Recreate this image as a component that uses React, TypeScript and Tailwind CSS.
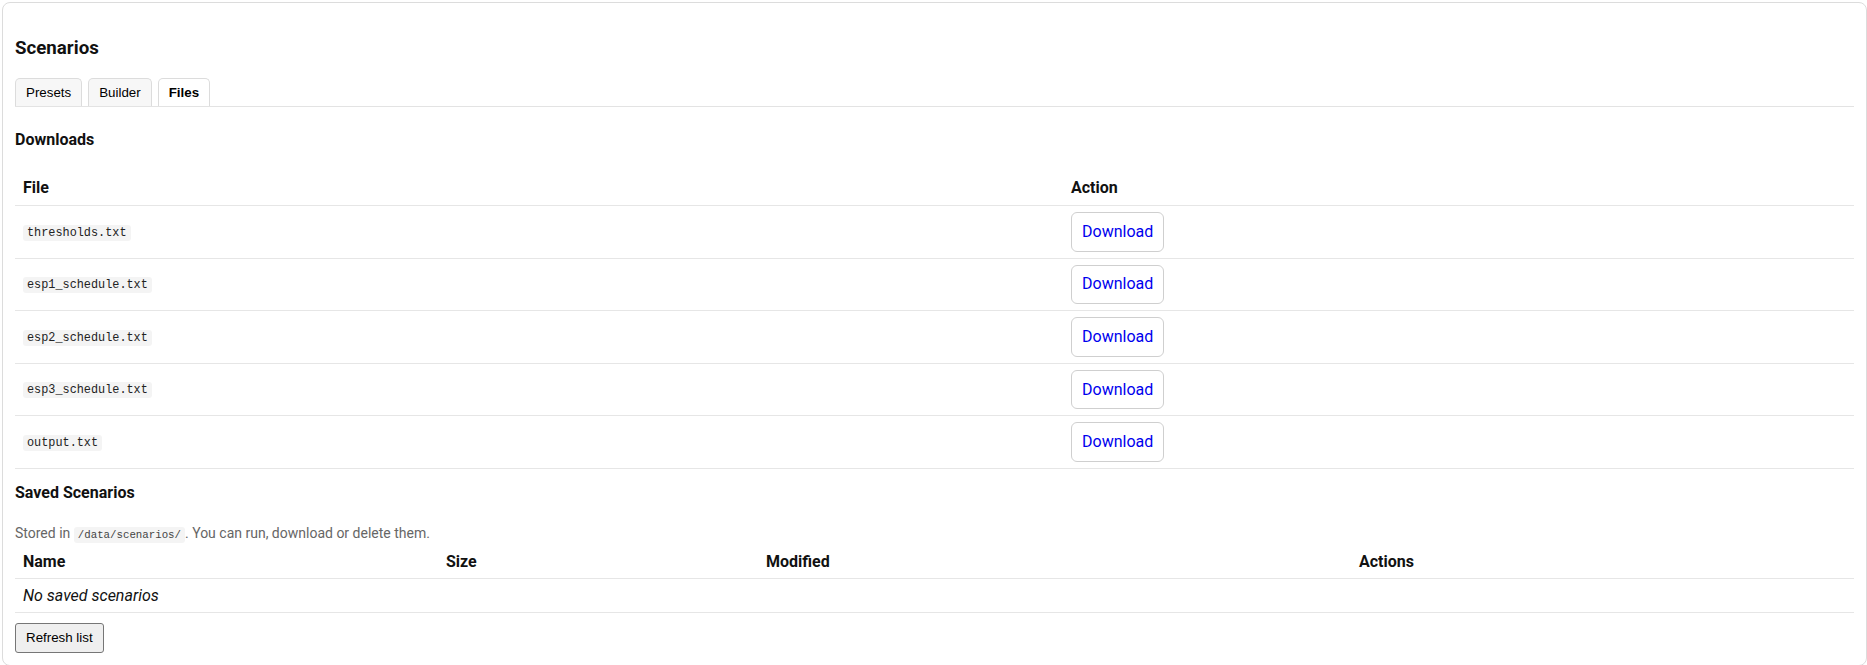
import React from "react";

const files = [
  "thresholds.txt",
  "esp1_schedule.txt",
  "esp2_schedule.txt",
  "esp3_schedule.txt",
  "output.txt",
];

const sans = "font-['Roboto','Segoe_UI',sans-serif]";
const arial = "font-['Liberation_Sans',Arial,sans-serif]";
const mono = "font-['Liberation_Mono','Courier_New',monospace]";

export default function App() {
  return (
    <div className={`pl-[2px] pt-[2px] bg-white text-[#111] ${sans}`}>
      <div className="border border-[#dcdcdc] rounded-[8px] p-3">
        <h3 className="mt-[21px] text-[18.72px] leading-[24px] font-bold text-[#111]">
          Scenarios
        </h3>

        <div className="mt-[18px] flex gap-[6px] border-b border-[#e3e3e3]">
          <button
            className={`${arial} h-[28px] px-[10px] pt-[6px] pb-[6px] text-[13.33px] leading-[15px] text-black bg-[#f7f7f7] border border-b-0 border-[#dcdcdc] rounded-t-[5px]`}
          >
            Presets
          </button>
          <button
            className={`${arial} h-[28px] px-[10px] pt-[6px] pb-[6px] text-[13.33px] leading-[15px] text-black bg-[#f7f7f7] border border-b-0 border-[#dcdcdc] rounded-t-[5px]`}
          >
            Builder
          </button>
          <button
            className={`${arial} h-[28px] px-[10px] pt-[6px] pb-[6px] text-[13.33px] leading-[15px] font-bold text-black bg-white border border-b-0 border-[#dcdcdc] rounded-t-[5px]`}
          >
            Files
          </button>
        </div>

        <h4 className="mt-[22.5px] text-[16px] leading-[20px] font-bold text-[#111]">
          Downloads
        </h4>

        <div className="mt-[20.5px]">
          <div className="grid grid-cols-[1048px_1fr] border-b border-[#e6e6e6]">
            <div className="px-2 pt-[8px] pb-[7px] text-[16px] leading-[20px] font-bold">File</div>
            <div className="px-2 pt-[8px] pb-[7px] text-[16px] leading-[20px] font-bold">Action</div>
          </div>
          {files.map((f) => (
            <div key={f} className="grid grid-cols-[1048px_1fr] border-b border-[#e6e6e6]">
              <div className="px-2 py-[6px] flex items-center">
                <span className="text-[16px] leading-[21.3px]">
                  <code
                    className={`${mono} text-[11.85px] bg-[#f4f4f4] text-[#222] rounded-[3px] px-[4px] py-[1px]`}
                  >
                    {f}
                  </code>
                </span>
              </div>
              <div className="px-2 py-[6px] flex items-center">
                <a
                  href="#"
                  className="h-[39.6px] flex items-center px-[10px] border border-[#cfcfcf] rounded-[6px] text-[16px] text-[#0000ee] no-underline bg-white"
                >
                  Download
                </a>
              </div>
            </div>
          ))}
        </div>

        <h4 className="mt-[14px] text-[16px] leading-[20px] font-bold text-[#111]">
          Saved Scenarios
        </h4>

        <p className="mt-[20.5px] text-[14px] leading-[20px] text-[#666]">
          Stored in{" "}
          <code
            className={`${mono} text-[10.75px] bg-[#f4f4f4] text-[#444] rounded-[3px] px-[4px] py-[2px]`}
          >
            /data/scenarios/
          </code>
          . You can run, download or delete them.
        </p>

        <div className="mt-[1px]">
          <div className="grid grid-cols-[423px_320px_593px_1fr] border-b border-[#e6e6e6]">
            <div className="px-2 py-[5.75px] text-[16px] leading-[20px] font-bold">Name</div>
            <div className="px-2 py-[5.75px] text-[16px] leading-[20px] font-bold">Size</div>
            <div className="px-2 py-[5.75px] text-[16px] leading-[20px] font-bold">Modified</div>
            <div className="px-2 py-[5.75px] text-[16px] leading-[20px] font-bold">Actions</div>
          </div>
          <div className="border-b border-[#e6e6e6]">
            <div className="px-2 py-[6px] text-[16px] leading-[21.3px] italic">No saved scenarios</div>
          </div>
        </div>

        <button
          className={`${arial} mt-[9.5px] px-[10px] py-[6px] text-[13.33px] leading-[16px] text-black bg-[#efefef] border border-[#767676] rounded-[3px]`}
        >
          Refresh list
        </button>
      </div>
    </div>
  );
}
